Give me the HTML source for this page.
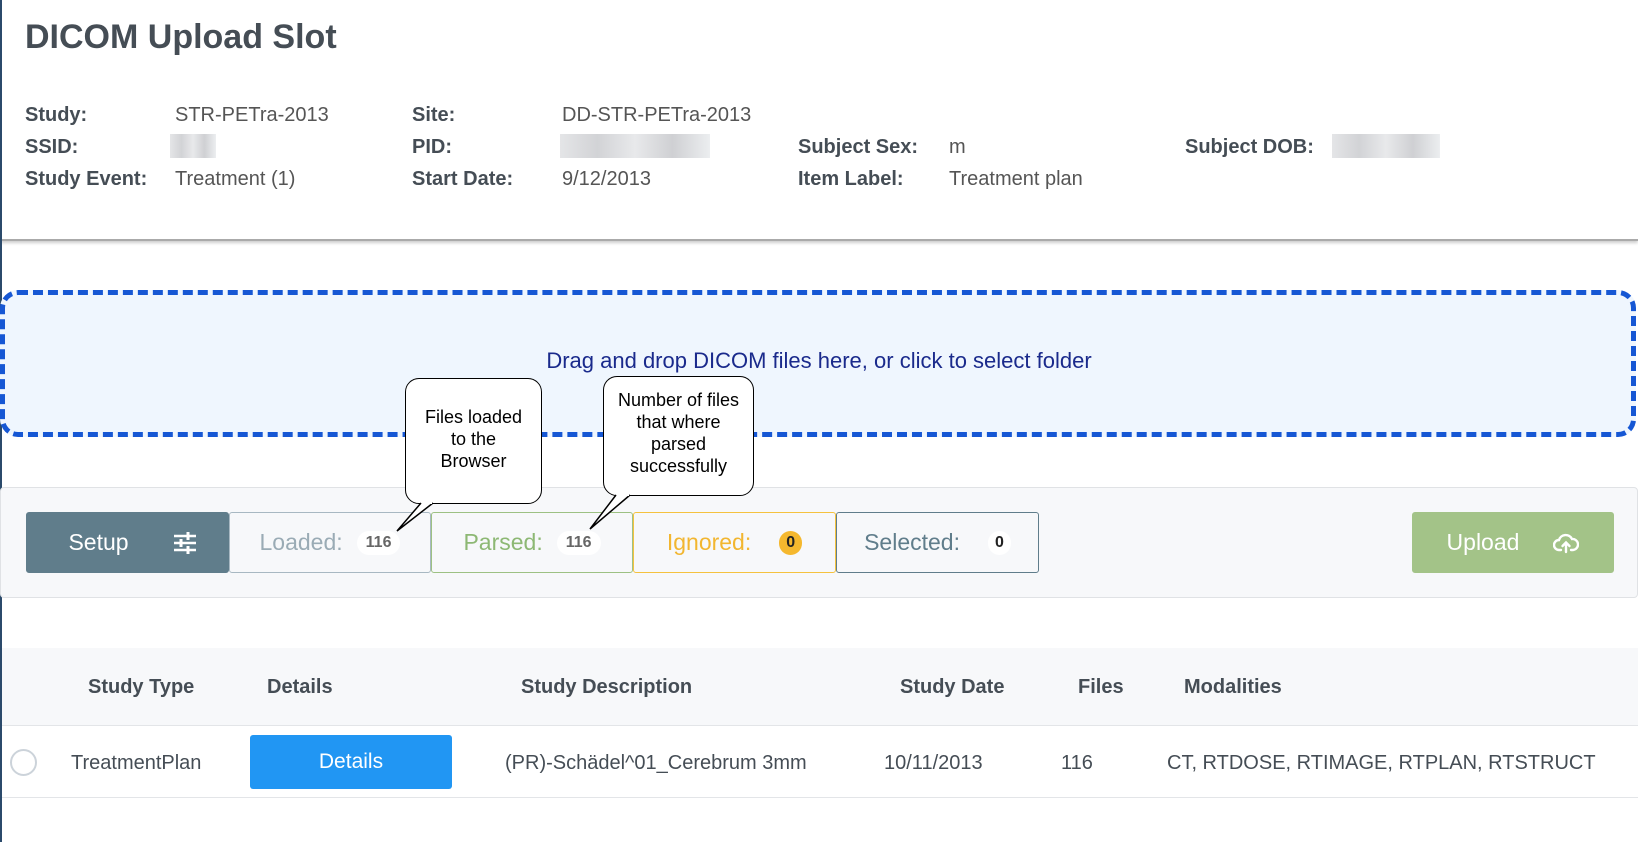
<!DOCTYPE html>
<html><head><meta charset="utf-8"><style>
*{box-sizing:border-box;margin:0;padding:0}
body{width:1638px;height:842px;overflow:hidden;background:#fff;font-family:"Liberation Sans",sans-serif;color:#495057;position:relative}
.a{position:absolute;white-space:nowrap}
h1{position:absolute;left:25px;top:18px;font-size:34px;font-weight:bold;color:#454d55}
.l{font-weight:bold;font-size:20px;color:#454d55}
.v{font-size:20px;color:#555}
.blur{position:absolute;height:24px;background:linear-gradient(90deg,#e4e5e7,#d2d3d6,#e8e9eb,#cfd0d3,#eceeF0)}
.hdr{position:absolute;left:0;top:0;width:1638px;height:241px;border-bottom:2px solid #aaa;box-shadow:0 2px 3px rgba(0,0,0,.2)}
.drop{position:absolute;left:0;top:290px;width:1636px;height:147px;background:#eff6fe;border:5px dashed #1657d4;border-radius:18px}
.bar{position:absolute;left:0;top:487px;width:1638px;height:111px;background:#f7f8fa;border:1px solid #e0e2e5;border-radius:4px}
.btn{position:absolute;top:512px;height:61px;border:1px solid;border-radius:3px;font-size:23px;display:flex;align-items:center;justify-content:center;gap:14px}
.badge{font-size:16px;font-weight:bold;background:#fff;border-radius:12px;padding:3px 9px;color:#666}
.call{position:absolute;background:#fff;border:1.5px solid #000;border-radius:14px;font-size:18px;color:#000;text-align:center;line-height:22px}
.th{position:absolute;top:676px;font-size:20px;font-weight:bold;color:#454d55}
.td{position:absolute;top:752px;font-size:20px;color:#454d55}
</style></head><body>
<div class="hdr"></div>
<div class="a" style="left:0;top:0;width:2px;height:842px;background:#2b4a6b"></div>
<h1>DICOM Upload Slot</h1>
<div class="a l" style="left:25px;top:104px">Study:</div><div class="a v" style="left:175px;top:104px">STR-PETra-2013</div>
<div class="a l" style="left:25px;top:136px">SSID:</div><div class="blur" style="left:170px;top:134px;width:46px"></div>
<div class="a l" style="left:25px;top:168px">Study Event:</div><div class="a v" style="left:175px;top:168px">Treatment (1)</div>
<div class="a l" style="left:412px;top:104px">Site:</div><div class="a v" style="left:562px;top:104px">DD-STR-PETra-2013</div>
<div class="a l" style="left:412px;top:136px">PID:</div><div class="blur" style="left:560px;top:134px;width:150px"></div>
<div class="a l" style="left:412px;top:168px">Start Date:</div><div class="a v" style="left:562px;top:168px">9/12/2013</div>
<div class="a l" style="left:798px;top:136px">Subject Sex:</div><div class="a v" style="left:949px;top:136px">m</div>
<div class="a l" style="left:798px;top:168px">Item Label:</div><div class="a v" style="left:949px;top:168px">Treatment plan</div>
<div class="a l" style="left:1185px;top:136px">Subject DOB:</div><div class="blur" style="left:1332px;top:134px;width:108px"></div>

<div class="drop"></div>
<div class="a" style="left:0;width:1638px;text-align:center;top:348px;font-size:22px;color:#1a2a8c">Drag and drop DICOM files here, or click to select folder</div>

<div class="bar"></div>
<div class="btn" style="left:26px;width:203px;background:#607d8b;border-color:#607d8b;color:#fff;gap:44px;padding-left:10px">Setup <svg width="24" height="22" viewBox="0 0 24 22" stroke="#fff" stroke-width="2.4" fill="none"><path d="M1 4h22M1 11h22M1 18h22"/><path d="M15 0v8M8 7v8M15 14v8" stroke-width="3"/></svg></div>
<div class="btn" style="left:229px;width:202px;background:#f7f8fa;border-color:#a8b8c2;color:#9aabb5">Loaded: <span class="badge">116</span></div>
<div class="btn" style="left:431px;width:202px;background:#f7f8fa;border-color:#9dc183;color:#8db874">Parsed: <span class="badge">116</span></div>
<div class="btn" style="left:633px;width:203px;background:#f7f8fa;border-color:#f5c23e;color:#f2b630;gap:28px">Ignored: <span class="badge" style="background:#f5b82e;color:#222;padding:3px 7px">0</span></div>
<div class="btn" style="left:836px;width:203px;background:#f7f8fa;border-color:#607d8b;color:#607d8b;gap:28px">Selected: <span class="badge" style="color:#222;padding:3px 7px">0</span></div>
<div class="btn" style="left:1412px;width:202px;background:#a3c388;border-color:#a3c388;color:#fff;gap:34px">Upload <svg width="26" height="22" viewBox="0 0 26 22" fill="none" stroke="#fff" stroke-width="2.4" stroke-linecap="round"><path d="M8 18H6a5 5 0 0 1 0-10 7 7 0 0 1 13-1 5 5 0 0 1 1 11h-2"/><path d="M13 20v-9M9.5 14l3.5-3.5 3.5 3.5"/></svg></div>

<div class="call" style="left:405px;top:378px;width:137px;height:126px;padding-top:27px">Files loaded<br>to the<br>Browser</div>
<div class="call" style="left:603px;top:376px;width:151px;height:120px;padding-top:12px">Number of files<br>that where<br>parsed<br>successfully</div>
<svg class="a" style="left:0;top:0" width="1638" height="842"><path d="M421 503 L397 531 L433 503" fill="#fff" stroke="#000" stroke-width="1.5"/><path d="M616 495 L590 529 L630 495" fill="#fff" stroke="#000" stroke-width="1.5"/><path d="M422 503h10M617 495h12" stroke="#fff" stroke-width="2"/></svg>

<div class="a" style="left:2px;top:648px;width:1636px;height:78px;background:#f7f8fa;border-bottom:1px solid #e3e5e8"></div>
<div class="th" style="left:88px">Study Type</div>
<div class="th" style="left:267px">Details</div>
<div class="th" style="left:521px">Study Description</div>
<div class="th" style="left:900px">Study Date</div>
<div class="th" style="left:1078px">Files</div>
<div class="th" style="left:1184px">Modalities</div>
<div class="a" style="left:10px;top:749px;width:27px;height:27px;border:2px solid #ccd3da;border-radius:50%"></div>
<div class="td" style="left:71px">TreatmentPlan</div>
<div class="a" style="left:250px;top:735px;width:202px;height:54px;background:#2196f3;border-radius:3px;color:#fff;font-size:21px;display:flex;align-items:center;justify-content:center">Details</div>
<div class="td" style="left:505px">(PR)-Schädel^01_Cerebrum 3mm</div>
<div class="td" style="left:884px">10/11/2013</div>
<div class="td" style="left:1061px">116</div>
<div class="td" style="left:1167px">CT, RTDOSE, RTIMAGE, RTPLAN, RTSTRUCT</div>
<div class="a" style="left:2px;top:797px;width:1636px;height:1px;background:#e3e5e8"></div>
</body></html>
